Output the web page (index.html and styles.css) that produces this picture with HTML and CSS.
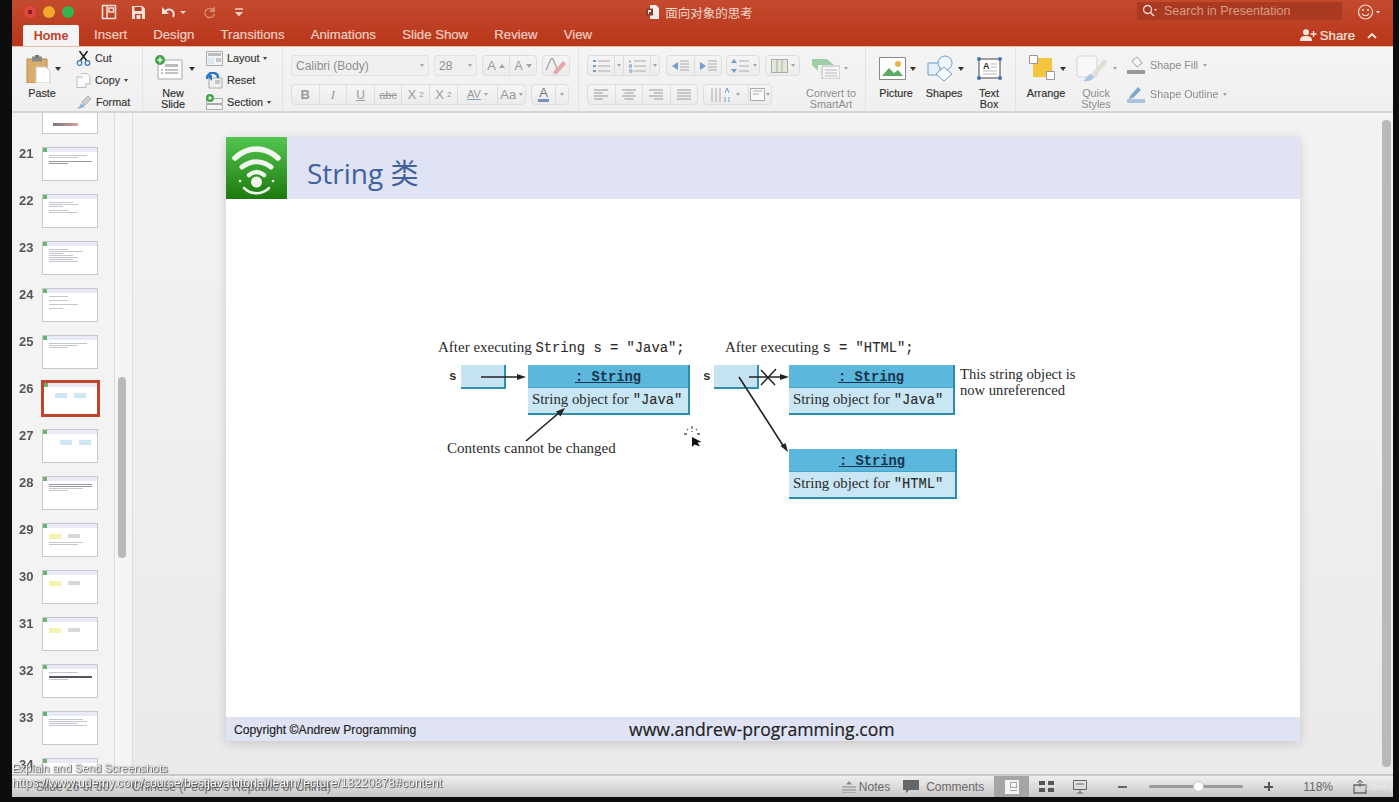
FILE: index.html
```html
<!DOCTYPE html>
<html lang="en">
<head>
<meta charset="utf-8">
<title>面向对象的思考</title>
<link rel="stylesheet" href="styles.css">
</head>
<body>
<div class="app">
  <header class="chrome">
    <div class="titlerow">
      <div class="tl-left">
        <span class="light red"></span><span class="light yellow"></span><span class="light green"></span>
        <svg class="qa q1" width="16" height="16" viewBox="0 0 16 16"><path d="M1.5 1.5h13v13h-13z" fill="none" stroke="#f4e0d8" stroke-width="1.6"/><path d="M6 2v12M8 4h4.500v4h-4.500z" fill="none" stroke="#f4e0d8" stroke-width="1.500"/></svg>
        <svg class="qa q2" width="15" height="15" viewBox="0 0 15 15"><path d="M1 1h10.500l2.500 2.500v10.500h-13z" fill="#f4e0d8"/><path d="M3.500 2h7v4h-7z" fill="#b93f24"/><path d="M4 9h7v5h-7z" fill="#b93f24"/><path d="M5.500 10h4v4h-4z" fill="#f4e0d8"/></svg>
        <svg class="qa q3" width="16" height="14" viewBox="0 0 16 14"><path d="M2 2v7h7z" fill="#f4e0d8"/><path d="M5 6.500c3-3 7-2.500 8.500 1 .5 1.500 .3 3-.5 4.500" fill="none" stroke="#f4e0d8" stroke-width="2"/></svg>
        <span class="caret-light q3c"></span>
        <svg class="qa q4" width="14" height="14" viewBox="0 0 14 14"><path d="M12 1v6h-6z" fill="#d98d75"/><path d="M9.500 4.500C6 2 2 4.500 2 8c0 2.500 2 4.500 4.500 4.500S11 11 11 8.500" fill="none" stroke="#d98d75" stroke-width="1.300"/></svg>
        <svg class="qa q5" width="10" height="9" viewBox="0 0 10 9"><path d="M1 1h8" stroke="#f0cfc4" stroke-width="1.500"/><path d="M1 4h8L5 8.500z" fill="#f0cfc4"/></svg>
      </div>
      <div class="tl-center">
        <svg width="13" height="14" viewBox="0 0 13 14"><path d="M4 0h6l3 3v11H4z" fill="#f4ece8"/><path d="M0 3.500h7v7H0z" fill="#8c3b28"/><path d="M2 5h3v2H3v2H2z" fill="#f4ece8"/></svg>
        <span class="doc-title">面向对象的思考</span>
      </div>
      <div class="tl-right">
        <div class="search">
          <svg width="15" height="14" viewBox="0 0 15 14"><circle cx="5.500" cy="5.500" r="4" fill="none" stroke="#f4e0d8" stroke-width="1.300"/><path d="M8.500 8.500l3.500 3.500" stroke="#f4e0d8" stroke-width="1.500"/><path d="M12 5h3l-1.500 2z" fill="#f4e0d8"/></svg>
          <span>Search in Presentation</span>
        </div>
        <svg class="smile" width="24" height="18" viewBox="0 0 24 18"><circle cx="8.500" cy="9" r="7" fill="none" stroke="#f4e0d8" stroke-width="1.200"/><circle cx="6" cy="7" r="1" fill="#f4e0d8"/><circle cx="11" cy="7" r="1" fill="#f4e0d8"/><path d="M5 10.500c1.500 3 5.500 3 7 0" fill="none" stroke="#f4e0d8" stroke-width="1.200"/><path d="M19 8h4l-2 2.500z" fill="#f4e0d8"/></svg>
      </div>
    </div>
    <div class="tabrow">
      <nav class="tabs">
        <span class="tab active">Home</span>
        <span class="tab">Insert</span>
        <span class="tab">Design</span>
        <span class="tab">Transitions</span>
        <span class="tab">Animations</span>
        <span class="tab">Slide Show</span>
        <span class="tab">Review</span>
        <span class="tab">View</span>
      </nav>
      <div class="share">
        <svg width="17" height="12" viewBox="0 0 17 12"><circle cx="6" cy="3.200" r="3" fill="#f7e6df"/><path d="M0 12c0-4 2-5 6-5s6 1 6 5z" fill="#f7e6df"/><path d="M13.500 2v6M10.500 5h6" stroke="#f7e6df" stroke-width="1.300"/></svg>
        <span>Share</span>
        <svg class="chev" width="10" height="7" viewBox="0 0 10 7"><path d="M1 6l4-4 4 4" fill="none" stroke="#f7e6df" stroke-width="1.800"/></svg>
      </div>
    </div>
  </header>

  <section class="ribbon">
    <div class="group g-clip">
      <div class="big paste">
        <div class="big-icon">
          <svg width="25" height="28" viewBox="0 0 25 28"><path d="M1 4h20v24H1z" fill="#d9ad6c" stroke="#b78d4f"/><path d="M6 1.500h10v5H6z" fill="#8b8b8b"/><path d="M9 0h4v3H9z" fill="#777"/><path d="M10 12h10l4 4v12H10z" fill="#fff" stroke="#ccc"/></svg>
          <span class="caret"></span>
        </div>
        <div class="big-label">Paste</div>
      </div>
      <div class="smalls">
        <div class="small">
          <svg width="15" height="15" viewBox="0 0 15 15"><path d="M3.500 0l7 9.500M11.500 0l-7 9.500" stroke="#222" stroke-width="1.600"/><circle cx="3.500" cy="12" r="2.300" fill="none" stroke="#3a76b5" stroke-width="1.200"/><circle cx="11.500" cy="12" r="2.300" fill="none" stroke="#3a76b5" stroke-width="1.200"/></svg>
          <span>Cut</span>
        </div>
        <div class="small">
          <svg width="15" height="15" viewBox="0 0 15 15"><path d="M1 4h6l3 3v7.500H1z" fill="#fbfbfb" stroke="#bbb"/><path d="M5 .5h6l3 3v7.500h-4" fill="#fbfbfb" stroke="#bbb"/></svg>
          <span>Copy</span><span class="caret tiny"></span>
        </div>
        <div class="small">
          <svg width="16" height="14" viewBox="0 0 16 14"><path d="M0 13c2 0 4-1 5-5l4 3c-2 2-5 3-9 2z" fill="#8fb4d9"/><path d="M6 7l6-6 3 3-6 6z" fill="#cfcfcf" stroke="#888" stroke-width=".6"/></svg>
          <span>Format</span>
        </div>
      </div>
    </div>

    <div class="group g-slides">
      <div class="big newslide">
        <div class="big-icon">
          <svg width="30" height="26" viewBox="0 0 30 26"><path d="M3 5h24v19H3z" fill="#fdfdfd" stroke="#aaa"/><path d="M10 9h13v3H10z" fill="#bbb"/><path d="M10 15h13M10 18h13M6 15h2M6 18h2" stroke="#888"/><circle cx="5" cy="5" r="5" fill="#3fa648"/><path d="M5 2.500v5M2.500 5h5" stroke="#fff" stroke-width="1.500"/></svg>
          <span class="caret"></span>
        </div>
        <div class="big-label">New<br>Slide</div>
      </div>
      <div class="smalls">
        <div class="small">
          <svg width="17" height="15" viewBox="0 0 17 15"><path d="M.5.500h16v14H.5z" fill="#f4f4f4" stroke="#aaa"/><path d="M2 2h13v3H2z" fill="#bbb"/><path d="M2 7h6v6H2z" fill="#dbe7f2"/><path d="M10 8h5M10 10h5" stroke="#999"/></svg>
          <span>Layout</span><span class="caret tiny"></span>
        </div>
        <div class="small">
          <svg width="17" height="17" viewBox="0 0 17 17"><path d="M3 6h13v10H3z" fill="#f1f1f1" stroke="#aaa"/><path d="M9 9h5M9 11h5" stroke="#999"/><path d="M1 7c0-4 3-7 7-6 3 .5 4 3 4 5" fill="none" stroke="#2f78c4" stroke-width="2.500"/><path d="M0 3h6v6z" fill="#2f78c4"/></svg>
          <span>Reset</span>
        </div>
        <div class="small">
          <svg width="17" height="16" viewBox="0 0 17 16"><path d="M.5 4.500h16v5H.5zM.5 10.500h16v5H.5z" fill="#f4f4f4" stroke="#aaa"/><circle cx="4" cy="4" r="4" fill="#3fa648"/><path d="M4 2v4M2 4h4" stroke="#fff"/></svg>
          <span>Section</span><span class="caret tiny"></span>
        </div>
      </div>
    </div>

    <div class="group g-font">
      <div class="ctl-row">
        <div class="select s-font"><span>Calibri (Body)</span><i class="caret tiny dim"></i></div>
        <div class="select s-size"><span>28</span><i class="caret tiny dim"></i></div>
        <div class="btns w-grow"><b class="cell">A<i class="up"></i></b><b class="cell small-a">A<i class="down"></i></b></div>
        <div class="btns w-clear"><b class="cell">
          <svg width="22" height="18" viewBox="0 0 22 18"><path d="M1 13L6 2h2l4 10" fill="none" stroke="#a8a8a8" stroke-width="1.400"/><path d="M8 15l10-11 3 3-9 10H9z" fill="#e7a8ab"/></svg>
        </b></div>
      </div>
      <div class="ctl-row">
        <div class="btns w-style">
          <b class="cell bold">B</b><b class="cell it">I</b><b class="cell un">U</b><b class="cell st">abc</b><b class="cell">X<sup>2</sup></b><b class="cell">X<sub>2</sub></b><b class="cell wide"><span class="av">AV</span><i class="caret tiny dim"></i></b><b class="cell"><span>Aa</span><i class="caret tiny dim"></i></b>
        </div>
        <div class="btns w-color"><b class="cell colorA"><span>A</span></b><b class="cell thin"><i class="caret tiny dim"></i></b></div>
      </div>
    </div>

    <div class="group g-para">
      <div class="para-ctl">
        <div class="ctl-row">
          <div class="btns w-list">
            <b class="cell mid"><svg width="18" height="14" viewBox="0 0 18 14"><path d="M6 2h12M6 7h12M6 12h12" stroke="#aaa"/><path d="M1 1h3v2H1zM1 6h3v2H1zM1 11h3v2H1z" fill="#7a9fcb"/></svg></b><b class="cell nar"><i class="caret tiny dim"></i></b>
            <b class="cell mid"><svg width="18" height="14" viewBox="0 0 18 14"><path d="M6 2h12M6 7h12M6 12h12" stroke="#aaa"/><path d="M2 1v3M1 6h3l-3 2h3M1 11h3v2H1" stroke="#7a9fcb" fill="none"/></svg></b><b class="cell nar"><i class="caret tiny dim"></i></b>
          </div>
          <div class="btns w-indent">
            <b class="cell"><svg width="18" height="12" viewBox="0 0 18 12"><path d="M9 1h9M9 4h9M9 7h9M9 10h9" stroke="#aaa"/><path d="M7 2v8L1 6z" fill="#6f9fd0"/></svg></b>
            <b class="cell"><svg width="18" height="12" viewBox="0 0 18 12"><path d="M9 1h9M9 4h9M9 7h9M9 10h9" stroke="#aaa"/><path d="M1 2v8l6-4z" fill="#6f9fd0"/></svg></b>
          </div>
          <div class="btns w-line"><b class="cell"><svg width="20" height="14" viewBox="0 0 20 14"><path d="M9 2h10M9 7h10M9 12h10" stroke="#aaa"/><path d="M4 0l3 4H1zM4 14l3-4H1z" fill="#6f9fd0"/></svg><i class="caret tiny dim"></i></b></div>
          <div class="btns w-cols"><b class="cell"><svg width="17" height="14" viewBox="0 0 17 14"><path d="M.5.500h16v13H.5z" fill="#dfe8d9" stroke="#aaa"/><path d="M6 1v12M11 1v12" stroke="#aaa"/></svg><i class="caret tiny dim"></i></b></div>
        </div>
        <div class="ctl-row">
          <div class="btns w-align">
            <b class="cell"><svg width="14" height="11" viewBox="0 0 14 11"><path d="M0 1h14M0 4h9M0 7h14M0 10h9" stroke="#999"/></svg></b>
            <b class="cell"><svg width="14" height="11" viewBox="0 0 14 11"><path d="M0 1h14M2.500 4h9M0 7h14M2.500 10h9" stroke="#999"/></svg></b>
            <b class="cell"><svg width="14" height="11" viewBox="0 0 14 11"><path d="M0 1h14M5 4h9M0 7h14M5 10h9" stroke="#999"/></svg></b>
            <b class="cell"><svg width="14" height="11" viewBox="0 0 14 11"><path d="M0 1h14M0 4h14M0 7h14M0 10h14" stroke="#999"/></svg></b>
          </div>
          <div class="btns w-dir">
            <b class="cell wide2"><svg width="22" height="16" viewBox="0 0 22 16"><path d="M1 1v14M5 1v14M9 1v14" stroke="#aaa"/><path d="M14 6l2-5 2 5M14 10v5M18 10v5" fill="none" stroke="#7a9fcb"/></svg><i class="caret tiny dim"></i></b>
            <b class="cell wide3"><svg width="15" height="13" viewBox="0 0 15 13"><path d="M.5.500h14v12H.5z" fill="#fafafa" stroke="#aaa"/><path d="M3 3h9M3 6h6" stroke="#aaa"/></svg><i class="caret tiny dim"></i></b>
          </div>
        </div>
      </div>
      <div class="big convert">
        <div class="big-icon">
          <svg width="28" height="20" viewBox="0 0 28 20"><path d="M0 0h15l7 6H6v6L0 6z" fill="#9fcfa6"/><path d="M10 7h18v13H10z" fill="#f5f5f5" stroke="#bbb"/><path d="M13 11h12M13 14h12M13 17h12" stroke="#bbb"/></svg>
          <span class="caret tiny dim"></span>
        </div>
        <div class="big-label dim">Convert to<br>SmartArt</div>
      </div>
    </div>

    <div class="group g-insert">
      <div class="big pict">
        <div class="big-icon">
          <svg width="27" height="23" viewBox="0 0 27 23"><path d="M.5.500h26v22H.5z" fill="#fff" stroke="#888"/><path d="M3 19l7-8 5 5 4-3 5 6z" fill="#5faa62"/><circle cx="19" cy="7" r="3" fill="#e6b54a"/></svg>
          <span class="caret"></span>
        </div>
        <div class="big-label">Picture</div>
      </div>
      <div class="big shapes">
        <div class="big-icon">
          <svg width="27" height="26" viewBox="0 0 27 26"><path d="M1 8h12v12H1z" fill="#e5eff8" stroke="#6d9fcf"/><circle cx="18" cy="8" r="7" fill="#eef5fb" stroke="#6d9fcf"/><path d="M17 12l8 7-8 7-8-7z" fill="#f9fbfd" stroke="#6d9fcf"/></svg>
          <span class="caret"></span>
        </div>
        <div class="big-label">Shapes</div>
      </div>
      <div class="big tbox">
        <div class="big-icon">
          <svg width="27" height="25" viewBox="0 0 27 25"><path d="M3 3h21v19H3z" fill="#fff" stroke="#444"/><path d="M15 8h6M15 11h6M7 15h14M7 18h14" stroke="#bbb"/><circle cx="3" cy="3" r="2" fill="#3f76b5"/><circle cx="24" cy="3" r="2" fill="#3f76b5"/><circle cx="3" cy="22" r="2" fill="#3f76b5"/><circle cx="24" cy="22" r="2" fill="#3f76b5"/><text x="7" y="13" class="tbox-a">A</text></svg>
        </div>
        <div class="big-label">Text<br>Box</div>
      </div>
    </div>

    <div class="group g-draw">
      <div class="big arrange">
        <div class="big-icon">
          <svg width="27" height="25" viewBox="0 0 27 25"><path d="M4 3h19v19H4z" fill="#f5c53f"/><path d="M.5.500h8v8h-8zM17.500 16.500h8v8h-8z" fill="#fff" stroke="#999"/></svg>
          <span class="caret"></span>
        </div>
        <div class="big-label">Arrange</div>
      </div>
      <div class="big quick">
        <div class="big-icon">
          <svg width="33" height="28" viewBox="0 0 33 28"><path d="M1 3c0-1 1-2 2-2h16c1 0 2 1 2 2v17c0 1-1 2-2 2H3c-1 0-2-1-2-2z" fill="#f8f8f8" stroke="#d5d5d5"/><path d="M28 5L15 20l3 2L31 7z" fill="#e6e1d6" stroke="#c8c8c8" stroke-width=".6"/><path d="M14 19c-2 1-4 5-7 7 5 1 10-1 11-4z" fill="#a8c6e6"/></svg>
          <span class="caret tiny dim"></span>
        </div>
        <div class="big-label dim">Quick<br>Styles</div>
      </div>
      <div class="shape-cmds">
        <div class="small dim">
          <svg width="18" height="18" viewBox="0 0 18 18"><path d="M5 5l5-4 5 6-5 4z" fill="#fafafa" stroke="#9d9d9d"/><path d="M0 14h18v4H0z" fill="#9a9a9a"/></svg>
          <span>Shape Fill</span><span class="caret tiny dim"></span>
        </div>
        <div class="small dim">
          <svg width="18" height="18" viewBox="0 0 18 18"><path d="M3 11l8-9 3 3-8 8-4 1z" fill="#7fa6d1"/><path d="M0 14h18v4H0z" fill="#a9c2de"/></svg>
          <span>Shape Outline</span><span class="caret tiny dim"></span>
        </div>
      </div>
    </div>
  </section>

  <div class="work">
    <aside class="pane">
      <div class="thumbs">
        <div class="row"><span class="num"></span><div class="thumb th-top"><u class="smear"></u></div></div>
        <div class="row"><span class="num">21</span><div class="thumb"><em></em><s class="l w80"></s><s class="l w60"></s><s class="l dark w90 gap"></s><s class="l dark w40"></s></div></div>
        <div class="row"><span class="num">22</span><div class="thumb"><em></em><s class="l w50"></s><s class="l w60"></s><s class="l w30"></s><s class="l w40 gap"></s><s class="l w60"></s></div></div>
        <div class="row"><span class="num">23</span><div class="thumb"><em></em><s class="l w40"></s><s class="l w70"></s><s class="l w30"></s><s class="l w50"></s><s class="l w60"></s><s class="l w50"></s><s class="l w60"></s></div></div>
        <div class="row"><span class="num">24</span><div class="thumb"><em></em><s class="l w40"></s><s class="l w40 gap"></s><s class="l w60 gap"></s><s class="l w30 gap"></s></div></div>
        <div class="row"><span class="num">25</span><div class="thumb"><em></em><s class="l w80"></s><s class="l w60"></s><s class="l w40"></s></div></div>
        <div class="row sel"><span class="num">26</span><div class="thumb"><em></em><div class="mini"><s class="blue"></s><s class="blue"></s></div></div></div>
        <div class="row"><span class="num">27</span><div class="thumb"><em></em><div class="mini right"><s class="blue"></s><s class="blue"></s></div></div></div>
        <div class="row"><span class="num">28</span><div class="thumb"><em></em><s class="l dark w90"></s><s class="l dark w90"></s><s class="l w70"></s><s class="l w40"></s></div></div>
        <div class="row"><span class="num">29</span><div class="thumb"><em></em><div class="mini y"><s class="yellow"></s><s class="gray"></s></div><s class="l w70 gap"></s><s class="l w60"></s></div></div>
        <div class="row"><span class="num">30</span><div class="thumb"><em></em><div class="mini y"><s class="yellow"></s><s class="gray"></s></div></div></div>
        <div class="row"><span class="num">31</span><div class="thumb"><em></em><div class="mini y"><s class="yellow"></s><s class="gray"></s></div></div></div>
        <div class="row"><span class="num">32</span><div class="thumb"><em></em><s class="l w60"></s><s class="l black w90 gap"></s><s class="l w40"></s></div></div>
        <div class="row"><span class="num">33</span><div class="thumb"><em></em><s class="l w70"></s><s class="l w80"></s><s class="l w60"></s><s class="l w80"></s></div></div>
        <div class="row"><span class="num">34</span><div class="thumb"><em></em></div></div>
      </div>
    </aside>
    <div class="pane-track"><span class="pane-thumb"></span></div>
    <main class="stage">
      <article class="slide">
        <div class="slide-head">
          <div class="logo">
            <svg width="61" height="61" viewBox="0 0 61 61"><path d="M9 20c13-12 30-12 43 0" fill="none" stroke="#f2f7ee" stroke-width="5.500" stroke-linecap="round"/><path d="M16 29c9-7 20-7 29 0" fill="none" stroke="#f2f7ee" stroke-width="5" stroke-linecap="round"/><path d="M23 37c5-4 10-4 15 0" fill="none" stroke="#f2f7ee" stroke-width="4.500" stroke-linecap="round"/><circle cx="30.500" cy="44" r="5.500" fill="#f2f7ee"/><path d="M18 50c7 7 18 7 25 0" fill="none" stroke="#f2f7ee" stroke-width="2.500" stroke-linecap="round"/><circle cx="14" cy="43" r="1.300" fill="#f2f7ee"/><circle cx="47" cy="43" r="1.300" fill="#f2f7ee"/></svg>
          </div>
          <h1 class="slide-title">String 类</h1>
        </div>
        <div class="slide-body">
          <div class="canvas">
            <svg class="wires" width="1074" height="518" viewBox="226 199 1074 518">
              <path d="M481 377h38" stroke="#222" stroke-width="1.300"/><path d="M526 377l-9-3v6z" fill="#222"/>
              <path d="M526 441l34-29" stroke="#222" stroke-width="1.600"/><path d="M565 408l-9 3.500 4.500 5z" fill="#222"/>
              <path d="M749 377h33" stroke="#222" stroke-width="1.300"/><path d="M789 377l-9-3v6z" fill="#222"/>
              <path d="M761 370l14 15M776 369l-15 16" stroke="#222" stroke-width="1.500"/>
              <path d="M739 377l45 70" stroke="#222" stroke-width="1.600"/><path d="M788 452l-7.500-6 5-3z" fill="#222"/>
            </svg>
            <div class="cap cap1">After executing <code>String s = "Java";</code></div>
            <div class="cap cap2">After executing <code>s = "HTML";</code></div>
            <code class="var v1">s</code><div class="ref r1"></div>
            <code class="var v2">s</code><div class="ref r2"></div>
            <div class="obj o1"><div class="obj-h"><code>: String</code></div><div class="obj-b">String object for <code>"Java"</code></div></div>
            <div class="obj o2"><div class="obj-h"><code>: String</code></div><div class="obj-b">String object for <code>"Java"</code></div></div>
            <div class="obj o3"><div class="obj-h"><code>: String</code></div><div class="obj-b">String object for <code>"HTML"</code></div></div>
            <div class="cap note1">This string object is<br>now unreferenced</div>
            <div class="cap note2">Contents cannot be changed</div>
            <svg class="cursor" width="22" height="24" viewBox="0 0 22 24"><path d="M9 12v10l2.500-2.500 5.500 2-2.500-4 4-.5z" fill="#111"/><path d="M9 1v3M9 6v1M1 9h3M14 9h3M4 4l1 1M14 4l-1 1" stroke="#555" stroke-width="1.300"/></svg>
          </div>
        </div>
        <div class="slide-foot">
          <span class="copy">Copyright ©Andrew Programming</span>
          <span class="site">www.andrew-programming.com</span>
        </div>
      </article>
      <span class="vbar"></span>
    </main>
  </div>

  <footer class="status">
    <span class="st-slide">Slide 26 of 50</span>
    <span class="st-lang">Chinese (People's Republic of China)</span>
    <div class="st-right">
      <span class="st-btn"><svg width="14" height="12" viewBox="0 0 14 12"><path d="M0 6h14M0 9h14M0 12h14" stroke="#888"/><path d="M7 0l3 3.500H4z" fill="#888"/></svg>Notes</span>
      <span class="st-btn cm"><svg width="16" height="13" viewBox="0 0 16 13"><path d="M0 0h16v10H6l-3 3v-3H0z" fill="#666"/></svg>Comments</span>
      <span class="view active"><svg width="14" height="14" viewBox="0 0 14 14"><path d="M0 0h14v14H0z" fill="#f4f4f4"/><path d="M5 2h7v6H5zM5 10h7v1H5z" fill="#a5a5a5"/><path d="M6 3h5v4H6z" fill="#f4f4f4"/></svg></span>
      <span class="view"><svg width="15" height="11" viewBox="0 0 15 11"><path d="M0 0h6v4H0zM9 0h6v4H9zM0 7h6v4H0zM9 7h6v4H9z" fill="#555"/></svg></span>
      <span class="view"><svg width="14" height="14" viewBox="0 0 14 14"><path d="M.5.500h13v9H.5z" fill="none" stroke="#666"/><path d="M3 4h8M7 10v3M4 13h6" stroke="#666"/></svg></span>
      <span class="zoom-minus"></span>
      <span class="slider"><i></i></span>
      <span class="zoom-plus"></span>
      <span class="pct">118%</span>
      <svg class="fit" width="14" height="14" viewBox="0 0 14 14"><path d="M1 5h12v8H1z" fill="none" stroke="#666" stroke-width="1.300"/><path d="M7 1v6M4 3l3-3 3 3" fill="none" stroke="#666"/></svg>
    </div>
  </footer>
  <div class="wm">Udemy</div>
</div>
<div class="hint"><div class="hint-a">Explain and Send Screenshots</div><div class="hint-b">https://www.udemy.com/course/bestjavatutorial/learn/lecture/18220878#content</div></div>
</body>
</html>
```
FILE: styles.css
```css
* { box-sizing: border-box; }
html, body { margin: 0; height: 100%; }
body {
  background: #0d0d0e;
  font-family: "Liberation Sans", Arial, sans-serif;
  overflow: hidden;
  position: relative;
}
.app {
  margin-left: 12px;
  width: 1381px;
  height: 797px;
  display: flex;
  flex-direction: column;
  position: relative;
  overflow: hidden;
  filter: blur(.4px);
}

/* title + tab band */
.chrome {
  height: 46px;
  flex: none;
  background: linear-gradient(#c44a2e, #b8361a);
  color: #f4dcd2;
}
.titlerow {
  height: 24px;
  display: grid;
  grid-template-columns: 1fr auto 1fr;
  align-items: center;
}
.tl-left { display: flex; align-items: center; padding-left: 12px; }
.light { width: 12px; height: 12px; border-radius: 50%; margin-right: 7px; }
.light.red { background: radial-gradient(#8c1f1f 0 25%, #e0473f 30%); }
.light.yellow { background: #f0a92c; }
.light.green { background: #36b34c; }
.qa { flex: none; }
.q1 { margin-left: 20px; }
.q2 { margin-left: 14px; }
.q3 { margin-left: 14px; }
.q3c { margin-left: 4px; }
.q4 { margin-left: 17px; }
.q5 { margin-left: 17px; }
.caret-light { width: 0; height: 0; border: 3px solid transparent; border-top: 3.500px solid #f4dcd2; border-bottom: 0; }
.tl-center { display: flex; align-items: center; gap: 6px; padding-right: 6px; }
.doc-title { font: 12.500px "Noto Sans CJK SC", "Liberation Sans", sans-serif; color: #f2d8ce; }
.tl-right { display: flex; align-items: center; justify-content: flex-end; padding-right: 12px; }
.search {
  width: 205px;
  height: 18px;
  margin-bottom: 2px;
  background: #a93a21;
  border-radius: 2px;
  display: flex;
  align-items: center;
  gap: 7px;
  padding-left: 5px;
  font-size: 12.500px;
  color: #d89b88;
}
.smile { margin-left: 15px; }
.tabrow { height: 22px; display: flex; justify-content: space-between; }
.tabs { display: flex; padding-left: 11px; }
.tab { padding: 0 13.100px; font-size: 13.200px; line-height: 22px; color: #f2cfc3; -webkit-text-stroke: .2px #f2cfc3; }
.tab.active {
  width: 56px;
  padding: 0;
  margin-right: 2px;
  margin-top: 1px;
  text-align: center;
  background: #f5f3f3;
  color: #c1452b;
  -webkit-text-stroke: 0;
  border-radius: 2px 2px 0 0;
  font-weight: 700;
  font-size: 12.500px;
}
.share { display: flex; align-items: center; gap: 3px; padding-right: 16px; font-size: 13.200px; color: #f7e6df; -webkit-text-stroke: .2px #f7e6df; }
.chev { margin-left: 9px; }

/* ribbon */
.ribbon {
  height: 67px;
  flex: none;
  display: flex;
  background: linear-gradient(#f5f4f4, #f1f0f0);
  border-top: 1px solid #e9bcaa;
  border-bottom: 2px solid #d6d5d6;
  font-size: 10.800px;
  color: #333;
}
.group { display: flex; flex: none; height: 64px; border-right: 1px solid #e4e3e3; }
.g-clip { width: 131px; padding-left: 8px; }
.g-slides { width: 140px; padding-left: 5px; }
.g-font { width: 296px; padding: 8px 0 0 8px; flex-direction: column; gap: 8px; }
.g-para { width: 287px; padding: 8px 0 0 8px; }
.g-insert { width: 150px; padding-left: 6px; }
.g-draw { border-right: 0; padding-left: 6px; }

.big { display: flex; flex-direction: column; align-items: center; flex: none; padding-top: 8px; }
.big-icon { height: 31px; flex: none; position: relative; display: flex; justify-content: center; }
.big-icon:has(> .caret) { margin-left: -7px; }
.big-icon .caret { position: absolute; left: calc(100% + 4px); top: 12px; }
.big-label { text-align: center; line-height: 11px; font-size: 10.800px; color: #2f2f2f; padding-top: 2px; -webkit-text-stroke: .15px #2f2f2f; }
.big-label.dim { color: #8d8d8d; -webkit-text-stroke: 0; }
.paste { width: 44px; }
.newslide { width: 50px; }
.convert { width: 52px; margin-left: 5px; margin-top: -8px; }
.convert svg { margin-top: 4px; }
.convert .big-icon:has(> .caret) { margin-left: -10px; }
.pict, .shapes { width: 48px; }
.pict svg { margin-top: 2px; }
.tbox { width: 42px; }
.tbox svg { margin-top: 1px; }
.tbox-a { font: 700 9px "Liberation Sans", sans-serif; fill: #333; }
.arrange { width: 48px; }
.quick { width: 48px; margin-left: 2px; }
.caret { display: inline-block; width: 0; height: 0; border: 3px solid transparent; border-top: 4px solid #333; border-bottom: 0; }
.caret.tiny { border-width: 3px 2.500px 0; border-top-color: #444; }
.caret.dim { border-top-color: #a5a5a5; }

.smalls { display: flex; flex-direction: column; margin-left: 12px; }
.g-slides .smalls { margin-left: 8px; }
.small { height: 22px; flex: none; display: flex; align-items: center; gap: 4px; white-space: nowrap; -webkit-text-stroke: .15px #333; }
.small svg { flex: none; }
.shape-cmds { margin-left: 7px; padding-top: 7px; display: flex; flex-direction: column; gap: 7px; }
.shape-cmds .small { color: #8d8d8d; gap: 5px; -webkit-text-stroke: 0; }

.ctl-row { display: flex; gap: 5px; height: 21px; }
.select {
  height: 21px;
  border: 1px solid #e3e2e2;
  border-radius: 3px;
  background: #f1f0f0;
  color: #8d8d8d;
  font-size: 12px;
  display: flex;
  align-items: center;
  justify-content: space-between;
  padding: 0 4px;
}
.s-font { width: 138px; }
.s-size { width: 43px; }
.btns {
  display: flex;
  height: 21px;
  border: 1px solid #dededd;
  border-radius: 4px;
  background: linear-gradient(#f6f5f5, #ececec);
  color: #9a9a9a;
}
.cell {
  flex: 1;
  display: flex;
  align-items: center;
  justify-content: center;
  gap: 3px;
  border-right: 1px solid #dededd;
  font-weight: 400;
  font-size: 13px;
  font-style: normal;
}
.cell:last-child { border-right: 0; }
.cell.bold { font-weight: 700; }
.cell sup, .cell sub { font-size: 8px; line-height: 0; }
.it { font-style: italic; font-family: "Liberation Serif", serif; }
.un { text-decoration: underline; font-size: 12px; }
.st { text-decoration: line-through; font-size: 11px; }
.w-grow { width: 55px; }
.small-a { font-size: 12px; }
.up, .down { width: 0; height: 0; border: 3px solid transparent; }
.up { border-bottom: 4px solid #a5a5a5; border-top: 0; }
.down { border-top: 4px solid #a5a5a5; border-bottom: 0; }
.w-clear { width: 28px; }
.w-style { width: 235px; }
.w-style .wide { flex: 1.500; }
.av { border-bottom: 1px solid #7a9fcb; line-height: 10px; font-size: 11px; }
.w-color { width: 38px; }
.colorA { flex: 2; }
.colorA span { border-bottom: 3px solid #7d8ec0; line-height: 12px; padding: 0 1px; color: #7a7a7a; }
.thin { flex: 1; }
.para-ctl { display: flex; flex-direction: column; gap: 8px; width: 213px; flex: none; }
.w-list { width: 73px; }
.mid { flex: 3; }
.nar { flex: 1; }
.w-indent { width: 56px; margin-left: 1px; }
.w-line { width: 34px; margin-left: -1px; }
.w-cols { width: 35px; }
.w-align { width: 111px; }
.w-dir { width: 69px; }
.wide2 { flex: 47; }
.wide3 { flex: 24; gap: 1px; }

/* workspace */
.work { flex: 1; display: flex; min-height: 0; }
.pane {
  width: 103px;
  flex: none;
  background: #f4f3f4;
  overflow: hidden;
  border-right: 1px solid #dedddf;
}
.thumbs { margin-top: -13px; padding-left: 7px; }
.row { display: flex; height: 47px; }
.num { width: 23px; flex: none; font-size: 13px; line-height: 13px; font-weight: 700; color: #555; }
.thumb {
  width: 56px;
  height: 34px;
  flex: none;
  background: #fff;
  border: 1px solid #c9c8d2;
  position: relative;
  padding: 7px 0 0 6px;
  overflow: hidden;
}
.thumb em {
  position: absolute;
  top: 0;
  left: 0;
  right: 0;
  height: 4px;
  background: linear-gradient(90deg, #6ab56a 0 4px, #e8eaf5 4px);
}
.thumb .l { display: block; height: 1px; margin-bottom: 1px; background: #c6c6ce; text-decoration: none; }
.thumb .l.dark { background: #9a9a9e; }
.thumb .l.black { background: #55555a; height: 2px; }
.thumb .l.gap { margin-top: 3px; }
.w30 { width: 30%; }
.w40 { width: 40%; }
.w50 { width: 50%; }
.w60 { width: 60%; }
.w70 { width: 70%; }
.w80 { width: 80%; }
.w90 { width: 90%; }
.th-top { padding: 22px 0 0 8px; }
.smear { display: block; width: 25px; height: 3px; margin-left: 2px; background: linear-gradient(90deg, #777, #dba0a0); }
.mini { display: flex; gap: 7px; justify-content: center; padding-top: 3px; padding-right: 6px; }
.mini.right { padding-left: 10px; }
.mini.y { justify-content: flex-start; }
.mini s { display: block; width: 12px; height: 5px; text-decoration: none; }
.mini .blue { background: #cfe7f3; }
.mini .yellow { background: #f8f2b0; }
.mini .gray { background: #d8d8d8; height: 4px; }
.sel .thumb { width: 59px; height: 37px; margin: -2px 0 0 -1px; border: 3px solid #bf4429; }
.pane-track {
  width: 18px;
  flex: none;
  background: #f5f4f5;
  border-right: 1px solid #dedddf;
  padding: 264px 0 0 3px;
}
.pane-thumb { display: block; width: 8px; height: 181px; border-radius: 4px; background: #b9b8ba; }
.stage {
  flex: 1;
  position: relative;
  background: linear-gradient(#f4f3f3, #ece9ea);
  padding: 24px 0 0 93px;
}
.vbar {
  position: absolute;
  top: 7px;
  right: 2px;
  width: 9px;
  height: 647px;
  border-radius: 4px;
  background: #b9b8ba;
}

/* slide */
.slide {
  width: 1074px;
  height: 604px;
  background: #fff;
  display: flex;
  flex-direction: column;
  box-shadow: 0 2px 10px rgba(0, 0, 0, .16);
}
.slide-head { height: 62px; flex: none; background: #dfe3f3; display: flex; align-items: center; }
.logo {
  width: 61px;
  height: 62px;
  background: linear-gradient(#52c650, #1d7a0e);
  display: flex;
  align-items: center;
  justify-content: center;
}
.slide-title {
  margin: 8px 0 0 20px;
  font: 400 28px "Open Sans", "Noto Sans CJK SC", sans-serif;
  color: #41619c;
  white-space: nowrap;
}
.slide-body { flex: 1; min-height: 0; }
.canvas { position: relative; height: 100%; }
.wires { position: absolute; left: 0; top: 0; z-index: 2; }
.slide-foot {
  height: 24px;
  flex: none;
  background: #dfe3f3;
  padding-top: 2px;
  display: flex;
  align-items: center;
  color: #1f1f1f;
}
.copy { margin-left: 8px; font-size: 12.200px; width: 395px; -webkit-text-stroke: .15px #1f1f1f; }
.site { font: 500 17.600px "Open Sans", sans-serif; color: #222; margin-top: -2px; -webkit-text-stroke: .2px #222; }

/* diagram */
.cap { position: absolute; font: 15px/16px "Liberation Serif", serif; color: #2a2a2a; white-space: nowrap; z-index: 3; }
.cap code, .obj code { font-family: "Liberation Mono", monospace; font-size: 13.800px; }
.cap1 code, .cap2 code, .obj-b code { -webkit-text-stroke: .12px #333; }
.cap1 { left: 212px; top: 140px; }
.cap2 { left: 499px; top: 140px; }
.note1 { left: 734px; top: 167px; font-size: 14.600px; }
.note2 { left: 221px; top: 241px; }
.var { position: absolute; top: 171px; font: 700 12.500px "Liberation Mono", monospace; color: #333; }
.v1 { left: 223px; }
.v2 { left: 477px; }
.ref {
  position: absolute;
  top: 166px;
  width: 45px;
  height: 24px;
  background: #c6e3f2;
  border-right: 2px solid #2f90ad;
  border-bottom: 2px solid #2f90ad;
}
.r1 { left: 235px; }
.r2 { left: 488px; }
.obj {
  position: absolute;
  border-right: 2px solid #2c8eab;
  border-bottom: 2px solid #2c8eab;
  height: 50px;
  background: #c9e6f4;
}
.o1 { left: 302px; top: 166px; width: 162px; }
.o2 { left: 563px; top: 166px; width: 166px; }
.o3 { left: 563px; top: 250px; width: 168px; }
.obj-h {
  height: 23px;
  background: #5cb7dd;
  border-bottom: 1px solid #4aa4c6;
  text-align: center;
  line-height: 22px;
}
.obj-h code { font-weight: 700; text-decoration: underline; color: #17344a; white-space: pre; }
.obj-b { padding: 3px 0 0 4px; font: 14.800px/16px "Liberation Serif", serif; color: #2a2a2a; white-space: nowrap; }
.cursor { position: absolute; left: 457px; top: 226px; z-index: 4; }

/* status */
.status {
  height: 23px;
  flex: none;
  background: linear-gradient(#f0efef, #c8c7c7);
  border-top: 2px solid #c9c8c8;
  display: flex;
  align-items: center;
  font-size: 12px;
  color: #6d6d6d;
}
.st-slide { margin-left: 24px; width: 96px; }
.st-right { margin-left: auto; display: flex; align-items: center; height: 100%; }
.st-btn { display: flex; align-items: center; gap: 3px; font-size: 12px; color: #6a6a6a; }
.st-btn.cm { margin-left: 13px; gap: 7px; margin-right: 10px; }
.view { width: 34px; height: 100%; display: flex; align-items: center; justify-content: center; }
.view.active { width: 35px; background: #a5a5a5; }
.zoom-minus { width: 9px; height: 2px; background: #666; margin-left: 21px; }
.slider { width: 94px; height: 3px; margin-left: 22px; background: #9b9b9b; border-radius: 2px; position: relative; }
.slider i { position: absolute; left: 44px; top: -4px; width: 11px; height: 11px; border-radius: 50%; background: #fbfbfb; border: 1px solid #c5c5c5; }
.zoom-plus { width: 9px; height: 9px; margin-left: 21px; background: linear-gradient(#555, #555) center / 9px 2px no-repeat, linear-gradient(#555, #555) center / 2px 9px no-repeat; }
.pct { margin-left: 30px; font-size: 12px; color: #666; }
.fit { margin-left: 20px; margin-right: 26px; }
.wm { position: absolute; right: 0; bottom: 5px; font-size: 9px; color: rgba(255, 255, 255, .5); }
.hint {
  position: absolute;
  left: 12px;
  top: 761px;
  line-height: 15px;
  color: #fff;
  text-shadow: 0 0 1px #333, 1px 1px 1px #555;
  white-space: nowrap;
  z-index: 9;
  filter: blur(.2px);
}
.hint-a { font-size: 11.400px; }
.hint-b { font-size: 12.250px; }
```
